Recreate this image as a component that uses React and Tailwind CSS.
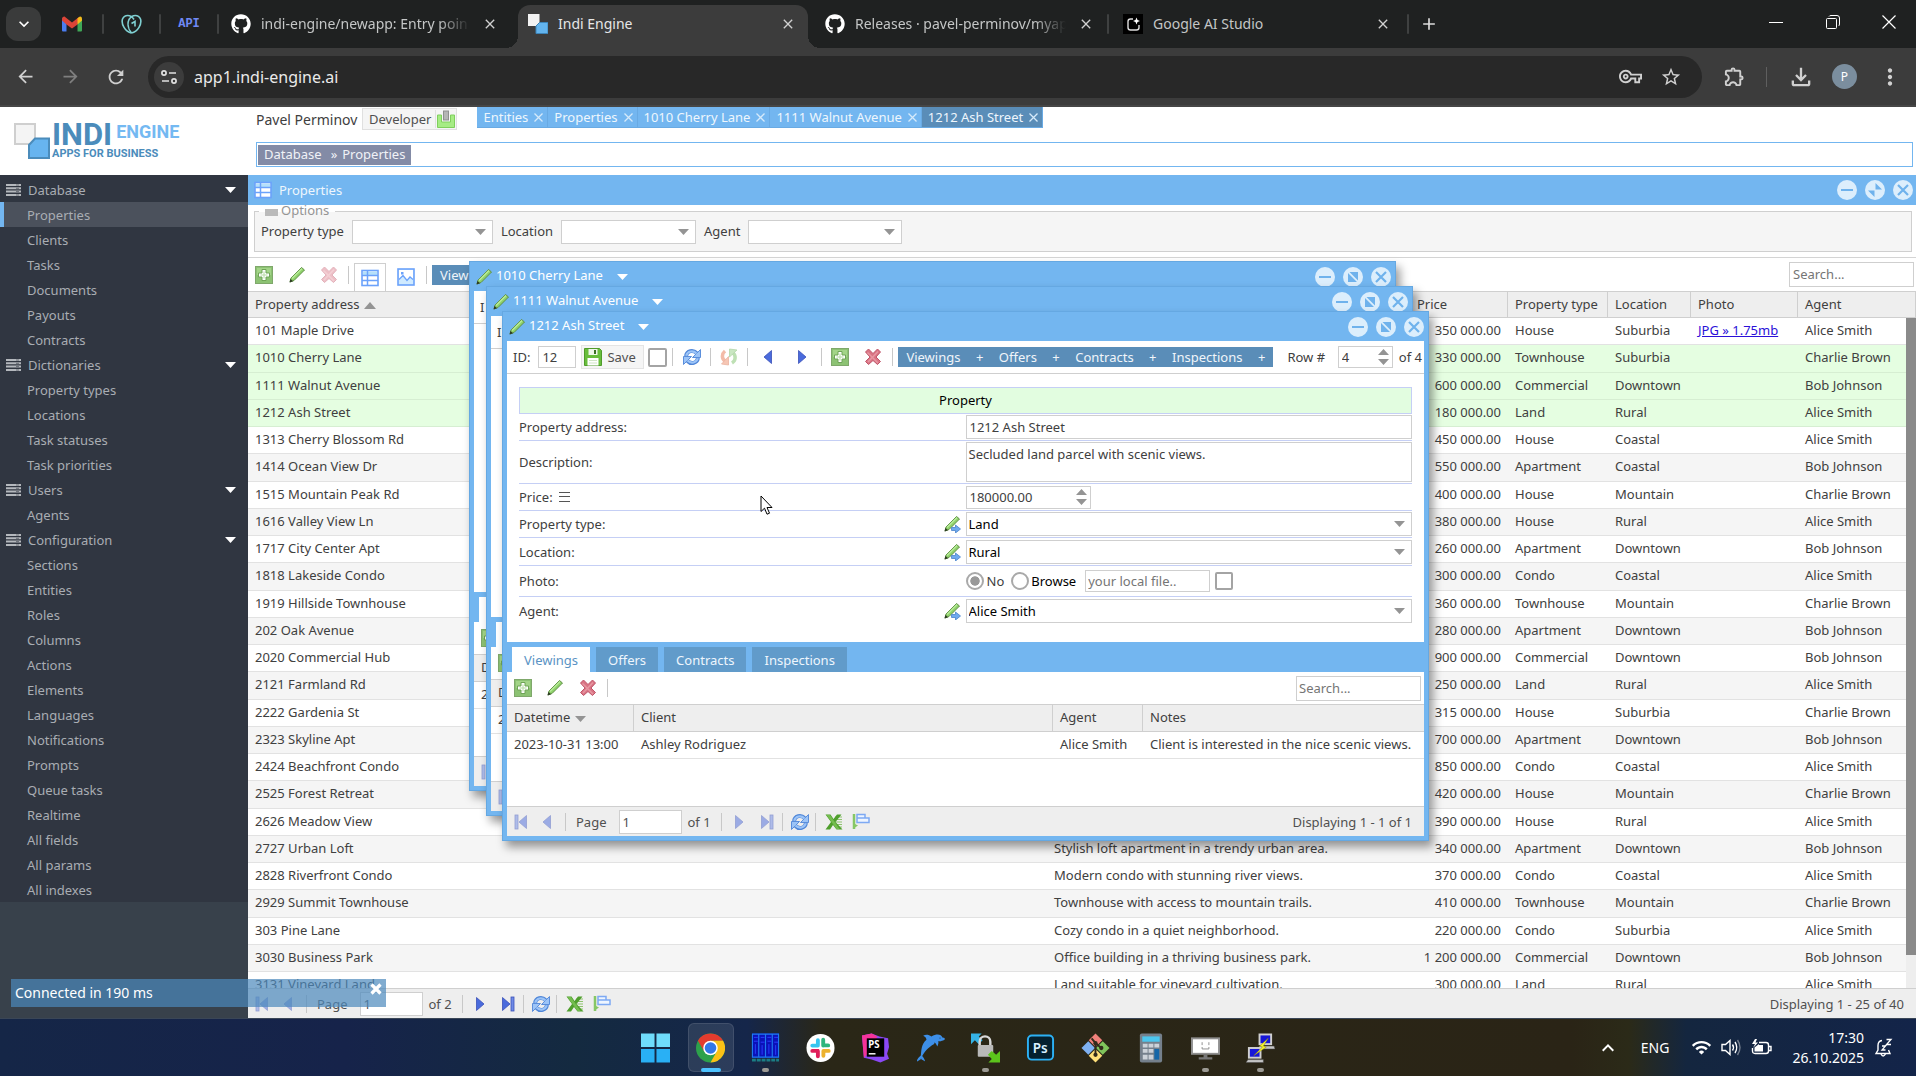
import React, { useState, useId } from 'react';
import {
  MdArrowBack,
  MdArrowForward,
  MdRefresh,
  MdClose,
  MdAdd,
  MdKeyboardArrowDown,
  MdKeyboardArrowUp,
  MdOutlineVpnKey,
  MdStarBorder,
  MdOutlineExtension,
  MdOutlineFileDownload,
  MdMoreVert,
  MdWifi,
} from 'react-icons/md';
import { FaGithub } from 'react-icons/fa';
import { GiDolphin } from 'react-icons/gi';

const menu = [
  { title: 'Database', items: ['Properties', 'Clients', 'Tasks', 'Documents', 'Payouts', 'Contracts'] },
  { title: 'Dictionaries', items: ['Property types', 'Locations', 'Task statuses', 'Task priorities'] },
  { title: 'Users', items: ['Agents'] },
  {
    title: 'Configuration',
    items: ['Sections', 'Entities', 'Roles', 'Columns', 'Actions', 'Elements', 'Languages', 'Notifications', 'Prompts', 'Queue tasks', 'Realtime', 'All fields', 'All params', 'All indexes'],
  },
];

// address, price, type, location, agent, description
const properties = [
  ['101 Maple Drive', '350 000.00', 'House', 'Suburbia', 'Alice Smith', ''],
  ['1010 Cherry Lane', '330 000.00', 'Townhouse', 'Suburbia', 'Charlie Brown', ''],
  ['1111 Walnut Avenue', '600 000.00', 'Commercial', 'Downtown', 'Bob Johnson', ''],
  ['1212 Ash Street', '180 000.00', 'Land', 'Rural', 'Alice Smith', ''],
  ['1313 Cherry Blossom Rd', '450 000.00', 'House', 'Coastal', 'Alice Smith', ''],
  ['1414 Ocean View Dr', '550 000.00', 'Apartment', 'Coastal', 'Bob Johnson', ''],
  ['1515 Mountain Peak Rd', '400 000.00', 'House', 'Mountain', 'Charlie Brown', ''],
  ['1616 Valley View Ln', '380 000.00', 'House', 'Rural', 'Alice Smith', ''],
  ['1717 City Center Apt', '260 000.00', 'Apartment', 'Downtown', 'Bob Johnson', ''],
  ['1818 Lakeside Condo', '300 000.00', 'Condo', 'Coastal', 'Alice Smith', ''],
  ['1919 Hillside Townhouse', '360 000.00', 'Townhouse', 'Mountain', 'Charlie Brown', ''],
  ['202 Oak Avenue', '280 000.00', 'Apartment', 'Downtown', 'Bob Johnson', ''],
  ['2020 Commercial Hub', '900 000.00', 'Commercial', 'Downtown', 'Bob Johnson', ''],
  ['2121 Farmland Rd', '250 000.00', 'Land', 'Rural', 'Alice Smith', ''],
  ['2222 Gardenia St', '315 000.00', 'House', 'Suburbia', 'Charlie Brown', ''],
  ['2323 Skyline Apt', '700 000.00', 'Apartment', 'Downtown', 'Bob Johnson', ''],
  ['2424 Beachfront Condo', '850 000.00', 'Condo', 'Coastal', 'Alice Smith', ''],
  ['2525 Forest Retreat', '420 000.00', 'House', 'Mountain', 'Charlie Brown', ''],
  ['2626 Meadow View', '390 000.00', 'House', 'Rural', 'Alice Smith', ''],
  ['2727 Urban Loft', '340 000.00', 'Apartment', 'Downtown', 'Bob Johnson', 'Stylish loft apartment in a trendy urban area.'],
  ['2828 Riverfront Condo', '370 000.00', 'Condo', 'Coastal', 'Alice Smith', 'Modern condo with stunning river views.'],
  ['2929 Summit Townhouse', '410 000.00', 'Townhouse', 'Mountain', 'Charlie Brown', 'Townhouse with access to mountain trails.'],
  ['303 Pine Lane', '220 000.00', 'Condo', 'Suburbia', 'Alice Smith', 'Cozy condo in a quiet neighborhood.'],
  ['3030 Business Park', '1 200 000.00', 'Commercial', 'Downtown', 'Bob Johnson', 'Office building in a thriving business park.'],
  ['3131 Vineyard Land', '300 000.00', 'Land', 'Rural', 'Alice Smith', 'Land suitable for vineyard cultivation.'],
];

const openTabs = ['Entities', 'Properties', '1010 Cherry Lane', '1111 Walnut Avenue', '1212 Ash Street'];

/* ---------- small icons ---------- */

const AddIcon = () => (
  <svg width="18" height="18" viewBox="0 0 18 18">
    <rect x="0.5" y="0.5" width="17" height="17" fill="#8cc273" stroke="#7fa86b" />
    <rect x="2" y="2" width="14" height="7" fill="#a3d488" />
    <path d="M7 3.5h4V7h3.500v4H11v3.500H7V11H3.500V7H7z" fill="#fff" stroke="#6fa457" />
    <path d="M8.500 5.500h1v3h3v1h-3v3h-1v-3h-3v-1h3z" fill="#b5dba2" />
  </svg>
);

const PencilIcon = ({ arrow }) => (
  <svg width="18" height="18" viewBox="0 0 18 18">
    <path d="M2 16l1-4L13.500 1.500l3 2.500L6 14.500z" fill="#8fd16a" stroke="#5f8f45" />
    <path d="M4 12.500L14 2.500" stroke="#b9ec9a" strokeWidth="1.500" />
    <path d="M1.500 16.500l1-3.500 2.500 2.200z" fill="#2c3a22" />
    {arrow && <path d="M8.500 12.500h4v-2.500l5 4-5 4v-2.500h-4z" fill="#6fa9ee" stroke="#4a83cc" strokeWidth="0.800" />}
  </svg>
);

const DeleteIcon = ({ faded }) => (
  <svg width="18" height="18" viewBox="0 0 18 18" opacity={faded ? 0.45 : 1}>
    <path
      d="M1.500 4L4.500 1 9 5.500 13.500 1l3 3-4.500 5 4.500 4.500-3 3L9 12.500 4.500 16.500l-3-3L6 9z"
      fill="#d97383"
      stroke="#c0566a"
    />
    <path d="M3.500 4.500L14 15M14 3.500L4 14" stroke="#e797a2" strokeWidth="1.500" />
  </svg>
);

const TableIcon = () => (
  <svg width="18" height="18" viewBox="0 0 18 18">
    <rect x="1" y="1.500" width="16" height="15" fill="#fff" stroke="#6ba2fb" strokeWidth="1.600" />
    <rect x="2" y="2.500" width="14" height="3.500" fill="#b5e0fa" />
    <path d="M1 6.500h16M1 11.500h16M6.500 1.500v15" stroke="#6ba2fb" strokeWidth="1.500" />
  </svg>
);

const PictureIcon = () => (
  <svg width="18" height="18" viewBox="0 0 18 18">
    <rect x="1" y="1" width="16" height="16" fill="#cfeaff" stroke="#6ba2fb" strokeWidth="1.600" />
    <path d="M2 2h14v9.500l-3-2.500-3 3.500-4-5-4 4z" fill="#fff" />
    <path d="M2 11.500l4-4 4 5 3-3.500 3 2.500" fill="none" stroke="#6ba2fb" strokeWidth="1.300" />
    <rect x="4" y="4" width="2.500" height="2.500" fill="#6ba2fb" />
  </svg>
);

const RefreshIcon = () => (
  <svg width="18" height="18" viewBox="0 0 18 18" fill="none">
    <path d="M3 8C4 2.500 10 1.500 13.500 5" stroke="#4f86d8" strokeWidth="4" />
    <path d="M17.500 1.500V9.500H9.500z" fill="#9cc4f7" stroke="#4f86d8" strokeWidth="0.900" />
    <path d="M3.200 7.700C4.500 3 10 2 13.500 5.500" stroke="#9cc4f7" strokeWidth="2.200" />
    <path d="M15 10C14 15.500 8 16.500 4.500 13" stroke="#4f86d8" strokeWidth="4" />
    <path d="M.5 16.500V8.500H8.500z" fill="#9cc4f7" stroke="#4f86d8" strokeWidth="0.900" />
    <path d="M14.800 10.300C13.500 15 8 16 4.500 12.500" stroke="#9cc4f7" strokeWidth="2.200" />
  </svg>
);

const RevertIcon = () => (
  <svg width="18" height="18" viewBox="0 0 18 18" fill="none" opacity="0.750">
    <path d="M5 3C1.500 6 1.500 10.500 5 13" stroke="#efa58c" strokeWidth="3.500" />
    <path d="M8.500 8.500v8.500L1.500 16z" fill="#f3b39b" stroke="#e39a82" strokeWidth="0.800" />
    <path d="M12 15c4-2.500 4-7.500 1-10" stroke="#a9d69b" strokeWidth="3.500" />
    <path d="M9.500 9V1L17 2z" fill="#b9dfae" stroke="#98c88b" strokeWidth="0.800" />
  </svg>
);

const SaveIcon = () => (
  <svg width="18" height="18" viewBox="0 0 18 18">
    <path d="M0.500 0.500h15l2 2v15h-17z" fill="#68bd3c" stroke="#4f9b2a" />
    <rect x="4.500" y="1" width="9" height="6" fill="#eef7ea" />
    <rect x="10" y="2" width="2" height="4" fill="#3c6f24" />
    <rect x="3.500" y="10" width="11" height="7.500" fill="#fff" />
    <path d="M5 12.500h8M5 15h8" stroke="#cfe4c5" />
  </svg>
);

const ExcelIcon = () => (
  <svg width="18" height="16" viewBox="0 0 18 16">
    <path d="M10 3h7M11 5.500h6M11 8h6M11 10.500h6M11 13h6" stroke="#8fc46f" />
    <path d="M0.500 0.500h5L8.500 5l3.500-4.500h4.500L10.500 8l7 7.500h-6L8 11l-3 4.500H0.500L6 8z" fill="#4f9f2d" />
    <path d="M1.500 1h3.500l9.500 14h-3z" fill="#74bd4f" />
  </svg>
);

const FlagIcon = () => (
  <svg width="18" height="17" viewBox="0 0 18 17">
    <path d="M2 1v15" stroke="#86c766" strokeWidth="2.500" />
    <path d="M3 11l3 1.500-3 2z" fill="#86c766" />
    <path d="M5 1.500h8v3.500h4v4.500H5zM5 5h8" fill="#eef5ff" stroke="#7da9f3" strokeWidth="1.500" />
  </svg>
);

const PageArrow = ({ back, bar, faded }) => (
  <svg width="14" height="16" viewBox="0 0 14 16" opacity={faded ? 0.5 : 1} className={back ? 'rotate-180' : ''}>
    <path d="M1.500 1.500L9 8l-7.500 6.500z" fill="#4a6bdc" stroke="#3a50b8" strokeWidth="0.800" />
    {bar && <rect x="10" y="1" width="3" height="14" fill="#6f8ae6" stroke="#3a50b8" strokeWidth="0.800" />}
  </svg>
);

const StackIcon = () => (
  <svg width="15" height="12" viewBox="0 0 15 12">
    <path d="M0 1h15M0 4.300h15M0 7.600h15M0 11h15" stroke="#b4b8bd" strokeWidth="2" />
    <path d="M10 1h3M10 4.300h3M10 7.600h3M10 11h3" stroke="#5d636c" strokeWidth="0.900" />
  </svg>
);

const Caret = ({ className }) => (
  <svg width="11" height="6" viewBox="0 0 11 6" className={className}>
    <path d="M0 0h11L5.500 6z" fill="currentColor" />
  </svg>
);

const Spinner = ({ className }) => (
  <svg width="11" height="16" viewBox="0 0 11 16" className={className}>
    <path d="M0 6L5.500 0 11 6zM0 10h11l-5.500 6z" fill="#949494" />
  </svg>
);

const ToolButton = ({ kind }) => (
  <button aria-label={kind} className="h-5 w-5">
    <svg width="20" height="20" viewBox="0 0 20 20">
      <circle cx="10" cy="10" r="10" fill="#dceefc" />
      {kind === 'minimize' && <path d="M4 10h12" stroke="#6fb2ec" strokeWidth="2" />}
      {kind === 'close' && <path d="M5 5l10 10M15 5L5 15" stroke="#6fb2ec" strokeWidth="2.200" />}
      {kind === 'restore' && <path d="M5 6v9h9zM6.500 5h8.500v8.500z" fill="#6fb2ec" />}
      {kind === 'maximize' && <path d="M10.500 3v6.500H17zM9.500 17v-6.500H3z" fill="#6fb2ec" />}
    </svg>
  </button>
);

const Sep = () => <span className="h-[18px] w-px shrink-0 bg-[#c8c8c8]" />;

/* ---------- browser chrome ---------- */

const TabClose = () => (
  <button aria-label="close tab" className="flex h-5 w-5 shrink-0 items-center justify-center text-[#d0d0d0]">
    <MdClose size={16} />
  </button>
);

const TabSep = () => <span className="h-5 w-[2px] shrink-0 rounded bg-[#3f4141]" />;

function GmailIcon() {
  return (
    <svg width="20" height="16" viewBox="0 0 20 16">
      <path d="M0 2v12.500q0 1 1 1h3.500V5z" fill="#4a7df0" />
      <path d="M20 2v12.500q0 1-1 1h-3.500V5z" fill="#3fa757" />
      <path d="M0 3Q0 .2 2.500.5L10 6.500 17 1l-1.500 7.500L10 12.500 4.500 8.500 0 4.500z" fill="#dc4437" />
      <path d="M15.500 2.200l2-1.500Q20 .2 20 3v1.500l-4.500 4z" fill="#f5bd1c" />
    </svg>
  );
}

function SquaresIcon() {
  return (
    <svg width="20" height="20" viewBox="0 0 20 20" className="shrink-0">
      <rect x="0" y="0" width="11.500" height="12" fill="#f2f2f2" />
      <path d="M8 19.500V12l3.500-3.500H20v11z" fill="#63b4ee" stroke="#3d84b8" />
    </svg>
  );
}

function TabStrip() {
  return (
    <div className="flex h-12 shrink-0 items-center bg-[#1f2121] text-sm text-[#c4c6c6]">
      <button aria-label="search tabs" className="ml-1.5 flex h-[34px] w-[35px] items-center justify-center rounded-xl bg-[#3a3b3b] text-white">
        <MdKeyboardArrowDown size={20} />
      </button>
      <div className="flex h-10 w-[61px] items-center justify-center"><GmailIcon /></div>
      <TabSep />
      <div className="flex h-10 w-[55px] items-center justify-center">
        <svg width="21" height="20" viewBox="0 0 21 20" fill="none" stroke="#7fd0d2" strokeWidth="1.600">
          <path d="M10.500 19C4 17.500 0 10 1.500 5 3.500.500 9.500 0 13 5.500" />
          <path d="M10.500 19C17 17.500 21 10 19.500 5 17.500.500 11.500 0 8 5.500 6 10 7.500 15.500 10.500 19" />
          <path d="M10.500 9.500l3.500-2v5" />
        </svg>
      </div>
      <TabSep />
      <div className="flex h-10 w-[56px] items-center justify-center font-['Liberation_Mono'] text-xs font-bold text-[#7089f5]">API</div>
      <TabSep />
      <div className="flex h-10 w-[299px] items-center gap-2.5 pr-[18px] pl-3">
        <FaGithub size={20} className="shrink-0 text-white" />
        <span className="flex-1 overflow-hidden mask-r-from-85% whitespace-nowrap">indi-engine/newapp: Entry poin</span>
        <TabClose />
      </div>
      <div className="relative flex h-[43px] w-[290px] items-center gap-2.5 self-end rounded-t-xl bg-[#3c3c3c] pr-2.5 pb-[5px] pl-2.5 text-[#e6e6e6]">
        <span className="absolute bottom-0 -left-3 h-3 w-3 bg-[radial-gradient(circle_at_0_0,transparent_12px,#3c3c3c_12px)]" />
        <span className="absolute -right-3 bottom-0 h-3 w-3 bg-[radial-gradient(circle_at_100%_0,transparent_12px,#3c3c3c_12px)]" />
        <SquaresIcon />
        <span className="flex-1">Indi Engine</span>
        <TabClose />
      </div>
      <div className="flex h-10 w-[299px] items-center gap-2.5 pr-[11px] pl-[17px]">
        <FaGithub size={20} className="shrink-0 text-white" />
        <span className="flex-1 overflow-hidden mask-r-from-85% whitespace-nowrap">Releases · pavel-perminov/myap</span>
        <TabClose />
      </div>
      <TabSep />
      <div className="flex h-10 w-[298px] items-center gap-2.5 pr-3.5 pl-3.5">
        <svg width="20" height="20" viewBox="0 0 20 20">
          <rect width="20" height="20" fill="#000" />
          <path d="M10 5H7.500Q5 5 5 7.500v6Q5 16 7.500 16h6q2.500 0 2.500-2.500V11" fill="none" stroke="#ddd" strokeWidth="1.400" />
          <path d="M13.500 3.500l1 2.500 2.500 1-2.500 1-1 2.500-1-2.500-2.500-1 2.500-1z" fill="#fff" />
        </svg>
        <span className="flex-1">Google AI Studio</span>
        <TabClose />
      </div>
      <TabSep />
      <button aria-label="new tab" className="flex h-8 w-10 items-center justify-center text-[#dcdcdc]">
        <MdAdd size={20} />
      </button>
      <div className="ml-auto flex h-full text-white">
        <button aria-label="minimize" className="flex w-[57px] items-center justify-center">
          <svg width="14" height="14" stroke="currentColor"><path d="M0 5.500h14" /></svg>
        </button>
        <button aria-label="restore" className="flex w-[57px] items-center justify-center pb-1">
          <svg width="14" height="14" fill="none" stroke="currentColor">
            <rect x="0.500" y="3.500" width="10" height="10" rx="1" />
            <path d="M3 1.500Q3.500.5 5 .5h6q2.500 0 2.500 2.500v6q0 1.500-1 2" />
          </svg>
        </button>
        <button aria-label="close" className="flex w-[55px] items-center justify-center pb-1">
          <svg width="14" height="14" stroke="currentColor" strokeWidth="1.200"><path d="M.5.5l13 13M13.500.5l-13 13" /></svg>
        </button>
      </div>
    </div>
  );
}

function AddressBar() {
  return (
    <div className="flex h-[59px] shrink-0 items-center border-b-2 border-[#464646] bg-[#3c3c3c] text-[#d0d0d0]">
      <button aria-label="back" className="ml-[15px] w-[22px]"><MdArrowBack size={21} /></button>
      <button aria-label="forward" className="ml-[23px] w-[22px] text-[#7f7f7f]"><MdArrowForward size={21} /></button>
      <button aria-label="reload" className="mr-[21px] ml-[23px] w-[22px]"><MdRefresh size={22} /></button>
      <div className="flex h-[42px] flex-1 items-center rounded-full bg-[#282828] pr-5 pl-1.5">
        <span className="flex h-[30px] w-[30px] items-center justify-center rounded-full bg-[#3c3c3c]">
          <svg width="16" height="14" viewBox="0 0 16 14" fill="none" stroke="#e0e0e0" strokeWidth="1.700">
            <circle cx="3" cy="3" r="2.100" />
            <path d="M8 3h7M1 11h7" />
            <circle cx="13" cy="11" r="2.100" />
          </svg>
        </span>
        <input aria-label="address" defaultValue="app1.indi-engine.ai" className="ml-2.5 flex-1 bg-transparent text-base text-[#eaeaea] outline-none" />
        <MdOutlineVpnKey size={23} />
        <MdStarBorder size={22} className="ml-[18px]" />
      </div>
      <div className="flex items-center pr-[13px] pl-[21px]">
        <MdOutlineExtension size={23} />
        <span className="mx-[20px] h-5 w-px bg-[#5f5f5f]" />
        <MdOutlineFileDownload size={28} />
        <span className="ml-[17px] flex h-[25px] w-[25px] items-center justify-center rounded-full bg-[#7b8e9e] text-xs text-white">P</span>
        <MdMoreVert size={26} className="ml-5" />
      </div>
    </div>
  );
}

/* ---------- application ---------- */

function Logo() {
  return (
    <div className="flex w-[248px] shrink-0 items-center pl-3.5 font-['Roboto',sans-serif]">
      <svg width="36" height="36" viewBox="0 0 36 36">
        <rect x="1" y="1" width="20" height="20" fill="#f4f4f4" stroke="#cfcfcf" strokeWidth="2" />
        <path d="M15 35V22l6-6.500h14V35z" fill="#67b4ef" stroke="#4b8cbb" strokeWidth="2" />
      </svg>
      <div className="ml-0.5">
        <div className="flex h-[26px] items-start">
          <span className="text-[31px] leading-[26px] font-bold text-[#4b8cbb]">INDI</span>
          <span className="ml-1 text-lg leading-5 font-bold text-[#74b9f2]">ENGINE</span>
        </div>
        <div className="text-[11px] leading-3 font-bold text-[#4b8cbb]">APPS FOR BUSINESS</div>
      </div>
    </div>
  );
}

function Header() {
  return (
    <header className="flex h-[68px] shrink-0">
      <Logo />
      <div className="flex-1 pr-[3px] pl-2">
        <div className="flex h-[35px] items-start">
          <span className="flex h-[26px] w-[106px] items-center text-sm text-[#404040]">Pavel Perminov</span>
          <button className="mt-px flex h-[22px] items-center border border-[#e0e0e0] bg-[#f5f5f5] pl-1.5 text-[#505050]">
            Developer
            <span className="ml-1 border-l border-[#e0e0e0] px-px">
              <svg width="18" height="18" viewBox="0 0 18 18">
                <path d="M.5 5h4v7h9V5h4v12.500H.5z" fill="#a6ec84" stroke="#7fcf5c" />
                <rect x="6.500" y="1" width="5" height="9" fill="#b5b5b5" stroke="#8f8f8f" />
              </svg>
            </span>
          </button>
          <div className="ml-5 flex">
            {openTabs.map((tab, idx) => (
              <div
                key={tab}
                className={`flex h-[21px] items-center gap-1.5 border-r border-b border-[#69aae3] pr-1 pl-1.5 text-[#eef6fd] ${
                  idx === openTabs.length - 1 ? 'bg-[#5a8db8]' : 'bg-[#73b6f0]'
                }`}
              >
                <span>{tab}</span>
                <button aria-label={`close ${tab}`}>
                  <svg width="9" height="9" stroke="#d6eafa" strokeWidth="1.300"><path d="M.5.5l8 8M8.500.5l-8 8" /></svg>
                </button>
              </div>
            ))}
          </div>
        </div>
        <nav className="flex h-[25px] items-center border border-[#73b6f0] px-px">
          <div className="flex h-5 items-center gap-[5px] bg-[#838ba6] px-1.5 pb-px text-[#f0f2f7]">
            <a href="#database" className="mr-1">Database</a>
            <span>»</span>
            <a href="#properties">Properties</a>
          </div>
        </nav>
      </div>
    </header>
  );
}

function Sidebar() {
  const [active, setActive] = useState('Properties');
  return (
    <aside className="w-[248px] shrink-0 bg-[#38414b] text-[#a9adb3]">
      <div className="bg-[#303641] pt-0.5">
        {menu.map((group) => (
          <div key={group.title}>
            <button className="flex h-[25px] w-full items-center pr-3 pl-1.5">
              <StackIcon />
              <span className="ml-[7px]">{group.title}</span>
              <Caret className="ml-auto text-white" />
            </button>
            {group.items.map((item) => (
              <a
                key={item}
                href="#section"
                onClick={(e) => { e.preventDefault(); setActive(item); }}
                className={`flex h-[25px] items-center border-l-4 pl-[23px] ${
                  active === item ? 'border-[#73b6f0] bg-[#4b515c]' : 'border-transparent'
                }`}
              >
                {item}
              </a>
            ))}
          </div>
        ))}
      </div>
    </aside>
  );
}

function Combo({ label, width }) {
  const id = useId();
  return (
    <div className="flex items-center">
      <label htmlFor={id} className="mr-2 pb-0.5">{label}</label>
      <div className={`relative mr-2 ${width}`}>
        <select id={id} className="block h-6 w-full appearance-none border border-[#cfcfcf] bg-white px-1">
          <option></option>
        </select>
        <Caret className="pointer-events-none absolute top-[9px] right-[7px] text-[#949494]" />
      </div>
    </div>
  );
}

function Filters() {
  return (
    <div className="h-[53px] border-b border-[#d4d4d4] pt-1.5 pr-1 pl-1.5">
      <div className="relative flex h-[41px] items-center border border-[#cfcfcf] bg-[#f5f5f5] pl-1.5 text-[#404040]">
        <span className="absolute -top-[10px] left-1 flex h-4 items-center gap-[3px] px-1.5 text-[#949494] before:absolute before:inset-x-0 before:top-[3px] before:h-[7px] before:bg-white">
          <span className="relative mt-1 h-[7px] w-[13px] bg-[#bababa]" />
          <span className="relative">Options</span>
        </span>
        <Combo label="Property type" width="w-[141px]" />
        <Combo label="Location" width="w-[135px]" />
        <Combo label="Agent" width="w-[154px]" />
      </div>
    </div>
  );
}

function Pager({ total, display, last }) {
  const id = useId();
  return (
    <div className="flex h-[30px] shrink-0 items-center border-t border-[#cfcfcf] bg-[#eee] pl-[7px] text-[#505050]">
      <button aria-label="first page"><PageArrow back bar faded /></button>
      <button aria-label="previous page" className="ml-2.5"><PageArrow back faded /></button>
      <span className="ml-[13px]" /><Sep />
      <label htmlFor={id} className="ml-2.5">Page</label>
      <input id={id} defaultValue="1" className="ml-3 h-6 w-[63px] border border-[#cfcfcf] bg-white px-[3px] outline-none" />
      <span className="mr-2.5 ml-1.5">of {total}</span>
      <Sep />
      <button aria-label="next page" className="ml-3"><PageArrow faded={last} /></button>
      <button aria-label="last page" className="mr-2 ml-3"><PageArrow bar faded={last} /></button>
      <Sep />
      <button aria-label="refresh" className="mr-1.5 ml-2"><RefreshIcon /></button>
      <Sep />
      <button aria-label="export to excel" className="ml-[9px]"><ExcelIcon /></button>
      <button aria-label="color rows" className="ml-[9px]"><FlagIcon /></button>
      <span className="mr-3 ml-auto">Displaying {display}</span>
    </div>
  );
}

function PropertyGrid() {
  return (
    <div className="relative flex-1 overflow-hidden">
      <table className="w-full table-fixed border-separate border-spacing-0 text-left text-[#404040]">
        <colgroup>
          <col />
          <col className="w-[363px]" />
          <col className="w-[98px]" />
          <col className="w-[100px]" />
          <col className="w-[83px]" />
          <col className="w-[107px]" />
          <col className="w-[118px]" />
        </colgroup>
        <thead>
          <tr className="h-[27px] bg-[#eee] *:border-y *:border-r *:border-[#cfcfcf] *:px-[7px] *:pt-0 *:pb-0.5 *:font-normal">
            <th>
              Property address
              <svg width="12" height="7" className="ml-[5px] inline"><path d="M0 7L6 0l6 7z" fill="#949494" /></svg>
            </th>
            <th>Description</th>
            <th>Price</th>
            <th>Property type</th>
            <th>Location</th>
            <th>Photo</th>
            <th>Agent</th>
          </tr>
        </thead>
        <tbody>
          {properties.map(([address, price, type, location, agent, description], idx) => (
            <tr
              key={address}
              className={`h-[27px] *:border-b *:px-[7px] *:pt-0 *:pb-[3px] *:whitespace-nowrap nth-[4n+2]:h-7 ${
                idx >= 1 && idx <= 3
                  ? 'bg-[#e5fee1] *:border-[#d6eed2]'
                  : 'bg-white *:border-[#e2e2e2] even:bg-[#f5f5f5]'
              }`}
            >
              <td>{address}</td>
              <td>{description}</td>
              <td className="text-right">{price}</td>
              <td>{type}</td>
              <td>{location}</td>
              <td>{idx === 0 && <a href="#photo" className="text-[#2a10d8] underline">JPG » 1.75mb</a>}</td>
              <td>{agent}</td>
            </tr>
          ))}
        </tbody>
      </table>
      <div className="absolute top-[27px] right-0 bottom-0 w-2.5 bg-[#eee]">
        <div className="h-[95%] bg-[#8a8a8a]" />
      </div>
    </div>
  );
}

function PropertiesPanel() {
  return (
    <main className="flex min-w-0 flex-1 flex-col">
      <div className="flex h-[30px] shrink-0 items-center bg-[#73b6f0] pr-[3px] pl-1.5 text-[#eef6fd]">
        <TableIcon />
        <h1 className="ml-[7px] flex-1">Properties</h1>
        <div className="flex gap-2">
          <ToolButton kind="minimize" />
          <ToolButton kind="maximize" />
          <ToolButton kind="close" />
        </div>
      </div>
      <Filters />
      <div className="flex h-[33px] shrink-0 items-center pl-[7px]">
        <button aria-label="create"><AddIcon /></button>
        <button aria-label="edit" className="ml-[15px]"><PencilIcon /></button>
        <button aria-label="delete" className="mr-2.5 ml-[14px]"><DeleteIcon faded /></button>
        <Sep />
        <button aria-label="grid view" className="ml-[5px] flex h-7 w-8 items-center justify-center self-end border border-b-0 border-[#cfcfcf]"><TableIcon /></button>
        <button aria-label="tile view" className="mx-[11px] mt-1"><PictureIcon /></button>
        <Sep />
        <button className="ml-[5px] h-5 bg-[#5a8db8] px-2 text-[#f0f5fa]">View</button>
        <input aria-label="search" placeholder="Search..." className="mr-0.5 ml-auto h-[25px] w-[125px] border border-[#cfcfcf] px-[3px] pb-0.5 placeholder:text-[#757575]" />
      </div>
      <PropertyGrid />
      <Pager total={2} display="1 - 25 of 40" />
    </main>
  );
}

/* ---------- record windows ---------- */

function FormRow({ label, height, children, last, jump }) {
  return (
    <div className={`flex items-center ${height} ${last ? '' : 'border-b border-[#c5cff5]'}`}>
      <div className="flex w-1/2 items-center justify-between">
        <span className="text-[#404040]">{label}</span>
        {jump && <button aria-label="open record" className="mr-[5px]"><PencilIcon arrow /></button>}
      </div>
      <div className="flex w-1/2 items-center text-black">{children}</div>
    </div>
  );
}

function FormSelect({ id, value }) {
  return (
    <div className="relative w-full">
      <select id={id} className="block h-6 w-full appearance-none border border-[#cfcfcf] bg-white px-0.5 text-black">
        <option>{value}</option>
      </select>
      <Caret className="pointer-events-none absolute top-[9px] right-[7px] text-[#949494]" />
    </div>
  );
}

function RecordToolbar({ recordId, row }) {
  const uid = useId();
  return (
    <>
      <label htmlFor={`${uid}id`}>ID:</label>
      <input id={`${uid}id`} defaultValue={recordId} className="ml-2 h-[22px] w-[38px] border border-[#cfcfcf] px-[3px]" />
      <button className="ml-[5px] flex h-6 w-[63px] items-center gap-[5px] border border-[#e4e4e4] bg-[#f5f5f5] pl-0.5 text-[#505050]">
        <SaveIcon />Save
      </button>
      <input type="checkbox" aria-label="autosave" className="mr-[5px] ml-1 h-[19px] w-[19px] appearance-none rounded-xs border-2 border-[#a4a4a4] bg-white" />
      <Sep />
      <button aria-label="reload" className="mr-[9px] ml-2.5"><RefreshIcon /></button>
      <Sep />
      <button aria-label="revert" className="mr-[9px] ml-[9px]"><RevertIcon /></button>
      <Sep />
      <button aria-label="previous record" className="ml-[11px]"><PageArrow back /></button>
      <button aria-label="next record" className="mr-2.5 ml-6"><PageArrow /></button>
      <Sep />
      <button aria-label="create" className="ml-[9px]"><AddIcon /></button>
      <button aria-label="delete" className="mr-2.5 ml-[15px]"><DeleteIcon /></button>
      <Sep />
      <div className="ml-[5px] flex h-5 w-[375px] items-center justify-between bg-[#5a8db8] px-2 text-[#f0f5fa]">
        {['Viewings', 'Offers', 'Contracts', 'Inspections'].map((name) => (
          <React.Fragment key={name}>
            <button>{name}</button>
            <button aria-label={`add ${name}`}>+</button>
          </React.Fragment>
        ))}
      </div>
      <label htmlFor={`${uid}row`} className="ml-3.5">Row #</label>
      <div className="relative ml-auto">
        <input id={`${uid}row`} defaultValue={row} className="block h-[22px] w-[55px] border border-[#cfcfcf] px-[3px]" />
        <Spinner className="absolute top-[3px] right-1" />
      </div>
      <span className="mr-0.5 ml-1.5">of 4</span>
    </>
  );
}

function RecordForm({ record, description, price }) {
  const uid = useId();
  const [address, , type, location, agent] = record;
  return (
    <>
      <div className="flex h-[27px] items-center justify-center border border-[#c5cff5] bg-[#e2fde0] pb-px text-black">Property</div>
      <FormRow height="h-[27px]" label={<label htmlFor={`${uid}a`}>Property address:</label>}>
        <input id={`${uid}a`} defaultValue={address} className="h-6 w-full border border-[#cfcfcf] px-[3px] text-[#404040]" />
      </FormRow>
      <FormRow height="h-[43px]" label={<label htmlFor={`${uid}d`}>Description:</label>}>
        <textarea id={`${uid}d`} defaultValue={description} className="h-10 w-full resize-none border border-[#cfcfcf] px-0.5 py-[3px] text-[#404040]" />
      </FormRow>
      <FormRow
        height="h-[27px]"
        label={
          <span className="flex items-center gap-1.5">
            <label htmlFor={`${uid}p`}>Price:</label>
            <svg width="11" height="10" stroke="#555"><path d="M0 .5h11M0 4.500h11M0 9.500h11" /></svg>
          </span>
        }
      >
        <div className="relative">
          <input id={`${uid}p`} defaultValue={price} className="block h-[23px] w-[125px] border border-[#cfcfcf] px-[3px] text-[#404040]" />
          <Spinner className="absolute top-[3px] right-1" />
        </div>
      </FormRow>
      <FormRow height="h-[27px]" jump label={<label htmlFor={`${uid}t`}>Property type:</label>}>
        <FormSelect id={`${uid}t`} value={type} />
      </FormRow>
      <FormRow height="h-7" jump label={<label htmlFor={`${uid}l`}>Location:</label>}>
        <FormSelect id={`${uid}l`} value={location} />
      </FormRow>
      <FormRow height="h-[31px]" label="Photo:">
        <label className="flex items-center gap-[3px] text-[#404040]">
          <input type="radio" name={`${uid}f`} defaultChecked className="h-[18px] w-[18px] appearance-none rounded-full border-2 border-[#a9a9a9] checked:bg-[radial-gradient(circle_closest-side,#999_62%,transparent_72%)]" />
          No
        </label>
        <label className="ml-[7px] flex items-center gap-0.5">
          <input type="radio" name={`${uid}f`} className="h-[18px] w-[18px] appearance-none rounded-full border-2 border-[#a9a9a9]" />
          Browse
        </label>
        <input aria-label="local file" placeholder="your local file.." className="ml-[9px] h-[22px] w-[125px] border border-[#cfcfcf] px-0.5 placeholder:text-[#757575]" />
        <input type="checkbox" aria-label="from url" className="ml-[5px] h-[18px] w-[18px] appearance-none rounded-xs border-2 border-[#a4a4a4] bg-white" />
      </FormRow>
      <FormRow height="h-[27px]" jump last label={<label htmlFor={`${uid}g`}>Agent:</label>}>
        <FormSelect id={`${uid}g`} value={agent} />
      </FormRow>
    </>
  );
}

function RecordWindow({ place, record, active, ...rest }) {
  return (
    <section className={`absolute flex h-[530px] w-[927px] flex-col border border-[#65a8e2] bg-[#73b6f0] px-1 pb-1 shadow-[4px_6px_9px_rgba(0,0,0,0.4)] ${place}`}>
      <div className="flex h-[29px] shrink-0 items-center pl-px text-white">
        <PencilIcon />
        <h2 className="ml-[3px] pb-[3px]">{record[0]}</h2>
        <Caret className="ml-3.5" />
        <div className="ml-auto flex gap-2">
          <ToolButton kind="minimize" />
          <ToolButton kind="restore" />
          <ToolButton kind="close" />
        </div>
      </div>

      <div className="flex h-[33px] shrink-0 items-center border-b border-[#cfcfcf] bg-white pl-1.5 text-[#404040]">
        {active ? <RecordToolbar {...rest} /> : <span>I</span>}
      </div>

      <div className="h-[268px] shrink-0 bg-white px-3 pt-[13px]">
        {active && <RecordForm record={record} {...rest} />}
      </div>

      <div className="flex h-[30px] shrink-0 items-end gap-1.5 pl-[5px] text-[#eef6fd]">
        {active ? (
          <>
            <button className="h-[25px] bg-white px-3 text-[#5a93c4]">Viewings</button>
            <button className="h-[25px] bg-[#619bca] px-3">Offers</button>
            <button className="h-[25px] bg-[#619bca] px-3">Contracts</button>
            <button className="h-[25px] bg-[#619bca] px-3">Inspections</button>
          </>
        ) : (
          <span className="h-[25px] w-[78px] bg-white" />
        )}
      </div>

      <div className="flex h-8 shrink-0 items-center bg-white pl-[7px]">
        <button aria-label="create"><AddIcon /></button>
        {active && (
          <>
            <button aria-label="edit" className="ml-3.5"><PencilIcon /></button>
            <button aria-label="delete" className="mr-2.5 ml-[15px]"><DeleteIcon /></button>
            <Sep />
            <input aria-label="search" placeholder="Search..." className="mr-[3px] ml-auto h-[25px] w-[125px] border border-[#cfcfcf] px-0.5 placeholder:text-[#757575]" />
          </>
        )}
      </div>

      <div className="flex-1 bg-white">
        <table className="w-full table-fixed border-separate border-spacing-0 text-left text-[#404040]">
          <colgroup>
            <col className="w-[127px]" />
            <col />
            <col className="w-[90px]" />
            <col className="w-[281px]" />
          </colgroup>
          <thead>
            <tr className="h-7 bg-[#eee] *:border-y *:border-r *:border-[#cfcfcf] *:px-[7px] *:pt-0 *:pb-0.5 *:font-normal *:last:border-r-0">
              <th>{active ? 'Datetime' : 'D'}<Caret className="ml-[5px] inline text-[#949494]" /></th>
              <th>{active && 'Client'}</th>
              <th>{active && 'Agent'}</th>
              <th>{active && 'Notes'}</th>
            </tr>
          </thead>
          <tbody>
            <tr className="h-[27px] *:border-b *:border-[#e2e2e2] *:px-[7px] *:pt-0 *:pb-[3px] *:whitespace-nowrap">
              <td>{active ? '2023-10-31 13:00' : '2'}</td>
              <td>{active && 'Ashley Rodriguez'}</td>
              <td>{active && 'Alice Smith'}</td>
              <td>{active && 'Client is interested in the nice scenic views.'}</td>
            </tr>
          </tbody>
        </table>
      </div>
      {active ? (
        <Pager total={1} display="1 - 1 of 1" last />
      ) : (
        <div className="flex h-[30px] shrink-0 items-center border-t border-[#cfcfcf] bg-[#eee] pl-[7px]">
          <PageArrow back bar faded />
        </div>
      )}
    </section>
  );
}

/* ---------- taskbar ---------- */

const apps = [
  {
    name: 'Start',
    icon: (
      <>
        <path d="M0 0h14v14H0zM16 0h14v14H16z" fill="#6fdcfb" />
        <path d="M0 16h14v14H0zM16 16h14v14H16z" fill="#29b0f5" />
      </>
    ),
  },
  {
    name: 'Chrome',
    active: true,
    icon: (
      <>
        <circle cx="15" cy="15" r="15" fill="#2da14b" />
        <path d="M2 7.500A15 15 0 0 1 28 7.500H15L8.500 18.700z" fill="#e33b2e" />
        <path d="M28 7.500A15 15 0 0 1 15 30l6.500-11.300L15 7.500z" fill="#fbc116" />
        <circle cx="15" cy="15" r="7.500" fill="#fff" />
        <circle cx="15" cy="15" r="6" fill="#3277e8" />
      </>
    ),
  },
  {
    name: 'Servers',
    running: true,
    icon: (
      <>
        <rect x="1" y="0" width="28" height="25" fill="#0a12b8" />
        <path d="M1 .7h28M8 1v24M15 1v24M22 1v24M1 24.500h28M1.500 1v24M28.500 1v24" stroke="#1e7bf0" strokeWidth="1.200" />
        <path d="M3 4h4M3 8h4M10 4h4M10 9h4M17 4h4M17 8h4M24 4h4M24 9h4M4.500 11v10M11.500 12v10M18.500 11v10M25.500 12v10" stroke="#2a3cff" />
        <path d="M1 27.500h28" stroke="#1b7d84" strokeWidth="3" strokeDasharray="4 1" />
      </>
    ),
  },
  {
    name: 'Slack',
    icon: (
      <>
        <circle cx="15" cy="15" r="14.500" fill="#fff" />
        <g strokeWidth="4" strokeLinecap="round" fill="none">
          <path d="M12.300 7v5M6.500 12.500h5.800" stroke="#36c5f0" />
          <path d="M17.800 6.500v6M18 12.300h5" stroke="#2eb67d" />
          <path d="M18 18v5M18 18h5.500" stroke="#ecb22e" />
          <path d="M12.300 18v5.500M6.500 18h5.500" stroke="#e01e5a" />
        </g>
      </>
    ),
  },
  {
    name: 'PhpStorm',
    icon: (
      <>
        <path d="M1 2l10-2 8 3 9 2 1 9-2 7 2 5-9 4-9-3-8-2z" fill="#8a48f5" />
        <path d="M1 2l10-2 6 3L6 22l-3 3z" fill="#f5339a" />
        <rect x="6" y="5" width="18" height="19" fill="#000" />
        <text x="7.500" y="14.500" fontSize="10" fontWeight="700" fill="#fff">PS</text>
        <path d="M8 21h7" stroke="#fff" strokeWidth="1.500" />
      </>
    ),
  },
  { name: 'Dolphin', node: <GiDolphin size={30} className="text-[#3d8fe8]" /> },
  {
    name: 'WinSCP',
    running: true,
    icon: (
      <>
        <path d="M0 0h11L8 3l4 4-4 4-4-4-4 4z" fill="#35b3e6" />
        <path d="M9 13V8.500a5 5 0 0 1 11 0V13" fill="none" stroke="#d8d8d8" strokeWidth="2.500" />
        <rect x="7" y="12" width="16" height="12" rx="1" fill="#b9b9b9" />
        <path d="M30 30H18l3.500-3.500-4-4.500 4-4 4.500 4L30 18z" fill="#5cc41c" />
      </>
    ),
  },
  {
    name: 'Photoshop',
    icon: (
      <>
        <rect x="2" y="2" width="26" height="25" rx="4" fill="#04202f" stroke="#2cb1f5" strokeWidth="2" />
        <text x="7" y="20" fontSize="14" fontWeight="600" fill="#d8f0ff">Ps</text>
      </>
    ),
  },
  {
    name: 'Git',
    icon: (
      <>
        <path d="M15 0l7 7-7 7-7-7z" fill="#f0807a" />
        <path d="M7.500 8l7 7-7 7-7-7z" fill="#7fb1f2" />
        <path d="M22.500 8l7 7-7 7-7-7z" fill="#80c45c" />
        <path d="M15 16l7 7-7 7-7-7z" fill="#ffe07a" />
        <path d="M11 5l4 5v12M15 10l6 5" stroke="#322a1c" strokeWidth="2" fill="none" />
        <circle cx="15" cy="10" r="2.200" fill="#322a1c" />
        <circle cx="21" cy="15" r="2.200" fill="#322a1c" />
        <circle cx="15" cy="22" r="2.200" fill="#322a1c" />
      </>
    ),
  },
  {
    name: 'Calculator',
    icon: (
      <>
        <rect x="4" y="0" width="23" height="30" rx="2" fill="#75808c" />
        <rect x="6.500" y="3" width="18" height="5.500" fill="#4cc6ee" />
        <path d="M7 10.500h5v4H7zM13 10.500h5v4h-5zM19 10.500h5v4h-5zM7 16h5v4H7zM13 16h5v4h-5zM7 22h5v5H7zM13 22h5v5h-5z" fill="#ccd2d9" />
        <rect x="19" y="16" width="5" height="11" fill="#1667a8" />
      </>
    ),
  },
  {
    name: 'Screen',
    running: true,
    icon: (
      <>
        <rect x="0" y="4" width="30" height="18" fill="#8f8f8f" />
        <rect x="2" y="6" width="26" height="14" fill="#fff" />
        <path d="M11.500 9v3M18.500 9v3M11.500 14v2h7v-2" stroke="#8f8f8f" fill="none" />
        <path d="M13 22h4v2.500h5V27H8v-2.500h5z" fill="#777" />
      </>
    ),
  },
  {
    name: 'PuTTY',
    running: true,
    icon: (
      <>
        <rect x="14" y="1" width="12" height="10" fill="#1616d8" stroke="#d0d0d0" strokeWidth="2" />
        <path d="M14 13h15l1 3H12z" fill="#c4c4c4" stroke="#444" strokeWidth="0.500" />
        <rect x="3" y="15" width="12" height="10" fill="#1616d8" stroke="#d0d0d0" strokeWidth="2" />
        <path d="M2 27h16v3H0z" fill="#c4c4c4" stroke="#444" strokeWidth="0.500" />
        <path d="M23 5l-9 8 3 1-9 9 13-9-3-1z" fill="#f7f52a" stroke="#8a8410" strokeWidth="0.500" />
      </>
    ),
  },
];

function Taskbar() {
  return (
    <footer className="relative flex h-[58px] shrink-0 items-center justify-center border-t border-[#3a4657] bg-[linear-gradient(90deg,#152647_0%,#16234a_18%,#142a40_30%,#15264a_39%,#2a2717_43%,#2a2416_82%,#2b2a18_85%,#14263f_88%,#132449_100%)] text-white">
      <div className="flex h-full">
        {apps.map((app) => (
          <button key={app.name} aria-label={app.name} className="relative flex h-full w-[55px] items-center justify-center">
            {app.active && <span className="absolute top-1 left-[5px] h-[49px] w-[46px] rounded-md border border-white/10 bg-white/10" />}
            {app.node || (
              <svg width="29" height="30" viewBox="0 0 30 30" className="relative font-['Noto_Sans']">{app.icon}</svg>
            )}
            {app.active && <span className="absolute bottom-1 h-1 w-5 rounded-full bg-[#4cc2ff]" />}
            {app.running && <span className="absolute bottom-1 h-1 w-[7px] rounded-full bg-[#9c9a94]" />}
          </button>
        ))}
      </div>
      <div className="absolute inset-y-0 right-[23px] flex items-center text-sm">
        <button aria-label="hidden icons"><MdKeyboardArrowUp size={24} /></button>
        <span className="ml-[21px]">ENG</span>
        <MdWifi size={21} className="ml-[22px]" />
        <svg width="21" height="17" viewBox="0 0 21 17" fill="none" stroke="#fff" strokeWidth="1.400" className="ml-[9px]">
          <path d="M1 5.500h3.500L9 1.500v14l-4.500-4H1z" />
          <path d="M11.500 5.500q2 3 0 6M14 3q3.500 5.500 0 11" />
          <path d="M16.500 1q5 7.500 0 15" opacity="0.400" />
        </svg>
        <svg width="21" height="17" viewBox="0 0 21 17" fill="none" stroke="#fff" strokeWidth="1.400" className="ml-[9px]">
          <path d="M8 3.500h7q2.500 0 2.500 2.500v6q0 2.500-2.500 2.500H4Q1.500 14.500 1.500 12V9M18 7.500h2v4h-2" />
          <path d="M3.500 8.500L8 5v1h4v6.500H3.500zM4 0L1 5h3L2 9l5-5.500H4.500L6 0z" fill="#fff" stroke="none" />
        </svg>
        <div className="ml-5 text-right leading-5">
          <div>17:30</div>
          <div>26.10.2025</div>
        </div>
        <svg width="19" height="20" viewBox="0 0 19 20" fill="none" stroke="#fff" strokeWidth="1.400" className="ml-2.5">
          <path d="M8 2.500Q4 3 4 7.500V12l-2 3.500h14L14.500 12M7 16q2 4 4.500 0" />
          <path d="M12.500 1.500h4.500l-4.500 5h4.500M8 8h3.500L8 12h3.500" strokeWidth="1.300" />
        </svg>
      </div>
    </footer>
  );
}

export default function App() {
  const [toast, setToast] = useState(true);

  return (
    <div className="flex h-screen flex-col overflow-hidden bg-[#1f2121] font-['Noto_Sans',sans-serif]">
      <TabStrip />
      <AddressBar />
      <div className="relative flex min-h-0 flex-1 flex-col bg-white text-[13px] leading-4">
        <Header />
        <div className="flex min-h-0 flex-1">
          <Sidebar />
          <PropertiesPanel />
        </div>

        <RecordWindow place="top-[154px] left-[469px]" record={properties[1]} />
        <RecordWindow place="top-[179px] left-[486px]" record={properties[2]} />
        <RecordWindow
          place="top-[204px] left-[502px]"
          active
          record={properties[3]}
          recordId="12"
          row="4"
          price="180000.00"
          description="Secluded land parcel with scenic views."
        />

        {toast && (
          <div className="absolute bottom-[11px] left-[11px] flex h-7 w-[375px] items-center bg-[#4b89bc]/70 pl-1 text-sm text-white">
            Connected in 190 ms
            <button aria-label="dismiss" onClick={() => setToast(false)} className="absolute top-1 right-1">
              <svg width="12" height="12" stroke="#fff" strokeWidth="3.200"><path d="M1.500 1.500l9 9M10.500 1.500l-9 9" /></svg>
            </button>
          </div>
        )}

        <svg width="14" height="21" viewBox="0 0 14 21" className="pointer-events-none absolute top-[388px] left-[760px]">
          <path d="M1 1v15.500l3.500-3.300 2.500 6 2.500-1-2.500-5.700h5z" fill="#fff" stroke="#000" />
        </svg>
      </div>
      <Taskbar />
    </div>
  );
}
